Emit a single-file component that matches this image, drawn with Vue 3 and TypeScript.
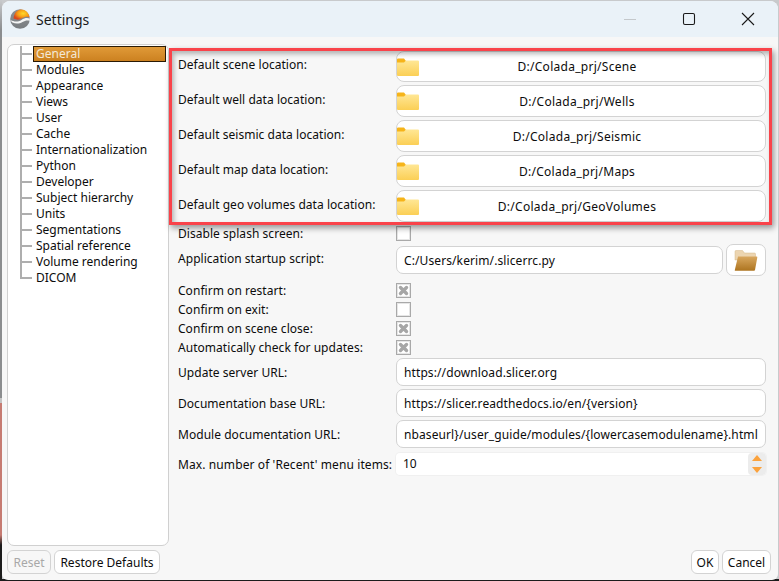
<script setup lang="ts">
const treeItems: string[] = ['General','Modules','Appearance','Views','User','Cache','Internationalization','Python','Developer','Subject hierarchy','Units','Segmentations','Spatial reference','Volume rendering','DICOM'];
const locations = [
  { label: 'Default scene location:', path: 'D:/Colada_prj/Scene' },
  { label: 'Default well data location:', path: 'D:/Colada_prj/Wells' },
  { label: 'Default seismic data location:', path: 'D:/Colada_prj/Seismic' },
  { label: 'Default map data location:', path: 'D:/Colada_prj/Maps' },
  { label: 'Default geo volumes data location:', path: 'D:/Colada_prj/GeoVolumes' },
];
const checks = [
  { label: 'Confirm on restart:', on: true },
  { label: 'Confirm on exit:', on: false },
  { label: 'Confirm on scene close:', on: true },
  { label: 'Automatically check for updates:', on: true },
];
const urls = [
  { label: 'Update server URL:', value: 'https://download.slicer.org' },
  { label: 'Documentation base URL:', value: 'https://slicer.readthedocs.io/en/{version}' },
  { label: 'Module documentation URL:', value: 'nbaseurl}/user_guide/modules/{lowercasemodulename}.html' },
];
</script>

<template>
  <div class="frame">
    <div class="window">
      <header class="titlebar">
        <svg class="logo" width="20" height="20" viewBox="0 0 20 20">
          <defs>
            <radialGradient id="sun" cx="0.6" cy="0.4" r="0.6">
              <stop offset="0" stop-color="#ffd92a" />
              <stop offset="0.55" stop-color="#f7a015" />
              <stop offset="1" stop-color="#d9481c" />
            </radialGradient>
            <linearGradient id="sw" x1="0" y1="0" x2="0" y2="1">
              <stop offset="0" stop-color="#8d9194" />
              <stop offset="1" stop-color="#787c7f" />
            </linearGradient>
          </defs>
          <circle cx="10" cy="10" r="9.800" fill="url(#sw)" />
          <path d="M3.500 9.500C4 4 7 .6 11 .4c4.500 0 8 3.400 8.600 8-2.800-1.300-5.200-.6-7.400.9-2.800 1.800-5.800 1.700-8.700.2z" fill="url(#sun)" />
          <path d="M.6 11c3.500 2 7.600 2 10.900-.1 3-1.900 5.700-2.300 8.300-1.300l.1 2.200c-2.700-.9-4.900-.3-7.400 1.200-3.200 1.900-6.600 2-10.100.6C1.600 13 1 12 .6 11z" fill="#f4f5f5" />
        </svg>
        <span class="title">Settings</span>
        <div class="controls">
          <svg width="14" height="14" viewBox="0 0 14 14"><path d="M1 7.500h12" stroke="#c4c8cb" fill="none" /></svg>
          <svg width="14" height="14" viewBox="0 0 14 14"><rect x="1.500" y="1.500" width="11" height="11" rx="1.500" stroke="#1a1a1a" stroke-width="1.100" fill="none" /></svg>
          <svg width="14" height="14" viewBox="0 0 14 14"><path d="M1 1l12 12M13 1L1 13" stroke="#1a1a1a" stroke-width="1.100" fill="none" /></svg>
        </div>
      </header>

      <div class="body">
        <aside class="side">
          <ul class="tree">
            <li v-for="(item, i) in treeItems" :key="item" class="node" :class="{ selected: i === 0 }">
              <span class="branch"></span>
              <span class="node-text">{{ item }}</span>
            </li>
          </ul>
          <div class="side-buttons">
            <button class="btn disabled">Reset</button>
            <button class="btn">Restore Defaults</button>
          </div>
        </aside>

        <main class="main">
          <div class="form">
            <div class="loc-group">
              <div v-for="l in locations" :key="l.label" class="row loc-row">
                <label class="lbl">{{ l.label }}</label>
                <div class="path-btn">
                  <svg class="folder" width="22" height="18" viewBox="0 0 22 18">
                    <defs>
                      <linearGradient id="fy" x1="0" y1="0" x2="0" y2="1">
                        <stop offset="0" stop-color="#ffe795" />
                        <stop offset="1" stop-color="#fbcf55" />
                      </linearGradient>
                    </defs>
                    <path d="M0 1.500a1 1 0 0 1 1-1h6l2 2.500v2H0z" fill="#f6b419" />
                    <path d="M0 4.500h7l2-2h12a1 1 0 0 1 1 1V17a1 1 0 0 1-1 1H1a1 1 0 0 1-1-1z" fill="url(#fy)" />
                  </svg>
                  <span class="path-text">{{ l.path }}</span>
                </div>
              </div>
            </div>

            <div class="row check-first">
              <label class="lbl">Disable splash screen:</label>
              <span class="check"></span>
            </div>

            <div class="row startup">
              <label class="lbl">Application startup script:</label>
              <div class="startup-fields">
                <div class="input grow">C:/Users/kerim/.slicerrc.py</div>
                <button class="open-btn" aria-label="Open">
                  <svg width="24" height="24" viewBox="0 0 24 24">
                    <defs>
                      <linearGradient id="fb" x1="0" y1="0" x2="0" y2="1">
                        <stop offset="0" stop-color="#d9a860" />
                        <stop offset="1" stop-color="#ad741f" />
                      </linearGradient>
                    </defs>
                    <path d="M1 3.500a1 1 0 0 1 1-1h6.500l2 2.500h10a1 1 0 0 1 1 1V12H1z" fill="#ecd5b1" stroke="#d6b98b" stroke-width=".5" />
                    <path d="M4 8.500h18.500a.8.8 0 0 1 .8 1L21 22a1 1 0 0 1-1 .8H1.500a.7.7 0 0 1-.7-.9z" fill="url(#fb)" />
                  </svg>
                </button>
              </div>
            </div>

            <div class="checks">
              <div v-for="c in checks" :key="c.label" class="row check-row">
                <label class="lbl">{{ c.label }}</label>
                <span class="check">
                  <svg v-if="c.on" width="13" height="13" viewBox="0 0 13 13">
                    <path d="M3.500 3.500l6 6M9.500 3.500l-6 6" stroke="#a6a6a6" stroke-width="3.400" stroke-linecap="round" fill="none" />
                  </svg>
                </span>
              </div>
            </div>

            <div class="urls">
              <div v-for="u in urls" :key="u.label" class="row url-row">
                <label class="lbl">{{ u.label }}</label>
                <div class="input">{{ u.value }}</div>
              </div>
            </div>

            <div class="row spin-row">
              <label class="lbl">Max. number of 'Recent' menu items:</label>
              <div class="spin">
                <span class="spin-value">10</span>
                <div class="spin-arrows">
                  <span class="arrow up"></span>
                  <span class="arrow down"></span>
                </div>
              </div>
            </div>
          </div>

          <div class="dialog-buttons">
            <button class="btn ok">OK</button>
            <button class="btn cancel">Cancel</button>
          </div>
        </main>

        <div class="highlight" aria-hidden="true"></div>
      </div>
    </div>
  </div>
</template>

<style>
html, body { margin: 0; padding: 0; }
</style>

<style scoped>
* { box-sizing: border-box; }
.frame {
  width: 779px;
  height: 581px;
  padding: 1px 1px 1px 2px;
  background:
    linear-gradient(#c8cacc 0, #8b8d8f 30px, #8b8d8f 398px, #c4c4c4 398px, #c4c4c4 403px, #c67b72 403px, #c67b72 535px, #1c1c1c 545px) left top / 2px 100% no-repeat,
    linear-gradient(#1c1c1c, #1c1c1c) left bottom / 100% 2px no-repeat,
    #c8cacc;
}
.window {
  width: 100%;
  height: 100%;
  background: #f7f7f7;
  border-radius: 8px 8px 6px 6px;
  overflow: hidden;
  font-family: "Noto Sans", sans-serif;
  font-size: 12px;
  color: #0c0c0c;
  display: flex;
  flex-direction: column;
}
.titlebar {
  flex: none;
  height: 36px;
  background: #eaf2f8;
  display: flex;
  align-items: center;
  padding-left: 8px;
}
.logo { margin-right: 6px; }
.title { font-size: 14px; color: #1a1a1a; }
.controls {
  margin-left: auto;
  display: flex;
  gap: 45px;
  padding-right: 23px;
}
.controls svg { display: block; }
.body {
  position: relative;
  flex: 1;
  display: flex;
  padding: 7px 7px 6px 5px;
  min-height: 0;
}
.side {
  flex: none;
  width: 162px;
  display: flex;
  flex-direction: column;
}
.tree {
  flex: 1;
  list-style: none;
  margin: 0;
  padding: 1px 2px 0 0;
  background: #fff;
  border: 1px solid #d0d0d0;
  border-radius: 7px;
}
.node {
  position: relative;
  height: 16px;
  padding-left: 25px;
  line-height: 16px;
}
.branch {
  position: absolute;
  left: 12px;
  top: 0;
  width: 12px;
  height: 9px;
  border-left: 2px solid #aeaeae;
  border-bottom: 2px solid #aeaeae;
}
.node:not(:last-child)::after {
  content: "";
  position: absolute;
  left: 12px;
  top: 9px;
  height: 7px;
  border-left: 2px solid #aeaeae;
}
.node-text {
  display: block;
  padding-left: 3px;
  white-space: nowrap;
}
.node.selected .node-text {
  background: linear-gradient(#e09a38, #cc8120);
  border: 1px solid #2a1a05;
  color: #f3e8d7;
  line-height: 14px;
  padding-left: 2px;
}
.side-buttons {
  flex: none;
  display: flex;
  gap: 3px;
  margin-top: 4px;
  height: 24px;
}
.btn {
  font: inherit;
  color: inherit;
  background: #fff;
  border: 1px solid #d3d3d3;
  border-radius: 6px;
  height: 24px;
  padding: 0;
  width: 106px;
}
.btn.disabled {
  width: 44px;
  background: #f7f7f7;
  color: #a8a8a8;
}
.main {
  flex: 1;
  min-width: 0;
  display: flex;
  flex-direction: column;
  padding-left: 9px;
}
.form { flex: 1; padding-right: 5px; }
.row {
  display: grid;
  grid-template-columns: 218px 1fr;
  align-items: center;
}
.lbl { white-space: nowrap; letter-spacing: 0.04px; }
.loc-group {
  display: flex;
  flex-direction: column;
  gap: 3px;
  padding-top: 7px;
}
.loc-row { height: 32px; }
.loc-row:first-child { height: 31px; }
.loc-row .lbl { position: relative; top: -2px; }
.path-btn {
  position: relative;
  height: 100%;
  background: #fff;
  border: 1px solid #d3d3d3;
  border-radius: 8px;
  display: flex;
  align-items: center;
  justify-content: center;
  padding-right: 8px;
}
.path-text { letter-spacing: 0.28px; }
.folder { position: absolute; left: 0; top: calc(50% - 9px); }
.check-first { height: 15px; margin-top: 3px; }
.check {
  width: 15px;
  height: 15px;
  background: #fff;
  border: 1px solid #a9a9a9;
  box-shadow: inset 0 0 0 1px #e6e6e6;
  display: block;
}
.check svg { display: block; margin: 0; }
.startup { margin-top: 4px; height: 32px; }
.startup .lbl { position: relative; top: -2px; }
.startup-fields { display: flex; align-items: center; gap: 3px; }
.input {
  height: 28px;
  line-height: 27px;
  background: #fff;
  border: 1px solid #d3d3d3;
  border-radius: 7px;
  padding-left: 7px;
  overflow: hidden;
  white-space: nowrap;
  letter-spacing: 0.1px;
}
.grow { flex: 1; }
.open-btn {
  flex: none;
  width: 40px;
  height: 32px;
  background: #fff;
  border: 1px solid #d3d3d3;
  border-radius: 7px;
  padding: 0;
  display: flex;
  align-items: center;
  justify-content: center;
}
.checks {
  display: flex;
  flex-direction: column;
  gap: 4px;
  margin-top: 6px;
}
.check-row { height: 15px; }
.urls {
  display: flex;
  flex-direction: column;
  gap: 3px;
  margin-top: 4px;
}
.url-row { height: 28px; }
.spin-row { height: 22px; margin-top: 5px; }
.spin-row .lbl { letter-spacing: 0.1px; }
.spin {
  position: relative;
  height: 22px;
  background: #fff;
  border-radius: 4px;
  padding-left: 7px;
  line-height: 22px;
  box-shadow: 0 0 0 1px #f0f0f0;
}
.spin-arrows {
  position: absolute;
  right: 0;
  top: 0;
  width: 18px;
  height: 22px;
  background: #ececec;
  border-radius: 4px;
  display: flex;
  flex-direction: column;
  align-items: center;
  justify-content: center;
  gap: 6px;
}
.arrow {
  width: 0;
  height: 0;
  border-left: 5px solid transparent;
  border-right: 5px solid transparent;
}
.arrow.up { border-bottom: 6px solid #fba23c; }
.arrow.down { border-top: 6px solid #fba23c; }
.dialog-buttons {
  flex: none;
  display: flex;
  justify-content: flex-end;
  gap: 3px;
  height: 24px;
}
.btn.ok { width: 28px; }
.btn.cancel { width: 49px; }
.highlight {
  position: absolute;
  left: 167px;
  top: 11px;
  width: 603px;
  height: 177px;
  border: 3px solid #f9434a;
  box-shadow: 2px 3px 6px rgba(0, 0, 0, 0.4), inset 2px 3px 5px rgba(0, 0, 0, 0.28);
  pointer-events: none;
}
</style>
